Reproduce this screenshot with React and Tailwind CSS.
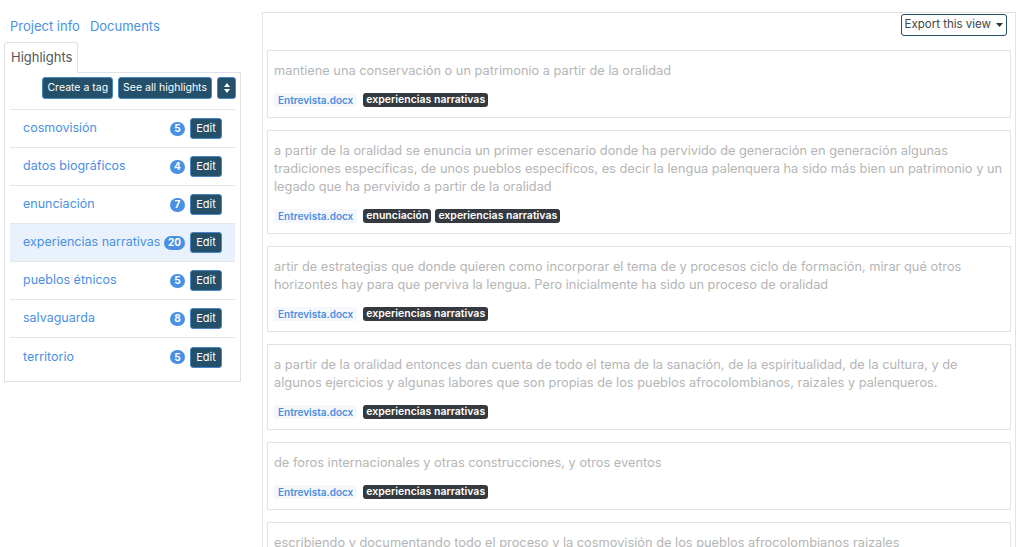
import React from "react";

const tags = [
  { name: "cosmovisión", count: 5 },
  { name: "datos biográficos", count: 4 },
  { name: "enunciación", count: 7 },
  { name: "experiencias narrativas", count: 20, active: true },
  { name: "pueblos étnicos", count: 5 },
  { name: "salvaguarda", count: 8 },
  { name: "territorio", count: 5 },
];

const highlights = [
  {
    text: "mantiene una conservación o un patrimonio a partir de la oralidad",
    tags: ["experiencias narrativas"],
  },
  {
    text: "a partir de la oralidad se enuncia un primer escenario donde ha pervivido de generación en generación algunas tradiciones específicas, de unos pueblos específicos, es decir la lengua palenquera ha sido más bien un patrimonio y un legado que ha pervivido a partir de la oralidad",
    tags: ["enunciación", "experiencias narrativas"],
  },
  {
    text: "artir de estrategias que donde quieren como incorporar el tema de y procesos ciclo de formación, mirar qué otros horizontes hay para que perviva la lengua. Pero inicialmente ha sido un proceso de oralidad",
    tags: ["experiencias narrativas"],
  },
  {
    text: "a partir de la oralidad entonces dan cuenta de todo el tema de la sanación, de la espiritualidad, de la cultura, y de algunos ejercicios y algunas labores que son propias de los pueblos afrocolombianos, raizales y palenqueros.",
    tags: ["experiencias narrativas"],
  },
  {
    text: "de foros internacionales y otras construcciones, y otros eventos",
    tags: ["experiencias narrativas"],
  },
  {
    text: "escribiendo y documentando todo el proceso y la cosmovisión de los pueblos afrocolombianos raizales",
    tags: ["experiencias narrativas"],
  },
];

const darkBtn =
  "bg-[#24506a] text-white border border-[#4a86c5] rounded-[3px] leading-none";

const App = () => {
  return (
    <div
      className="flex items-start h-[547px] overflow-hidden bg-white text-[13px]"
      style={{ fontFamily: "Inter, 'Noto Sans', sans-serif" }}
    >
      {/* Sidebar */}
      <div className="w-[237px] ml-[4px] mt-[17px] shrink-0">
        <div className="flex gap-[10px] pl-[6px] h-[18px] items-center text-[#4a90e2] text-[13px] mt-[1px]">
          <span>Project info</span>
          <span>Documents</span>
        </div>
        <div className="flex mt-[5px]">
          <div className="w-[74px] h-[31px] border border-b-0 border-[#dee2e6] rounded-t-[3px] flex items-center pl-[6px] text-[#555] bg-white relative top-[1px]">
            Highlights
          </div>
        </div>
        <div className="border border-[#dee2e6] pb-[5px]">
          <div className="flex justify-end gap-[5px] pt-[4px] pr-[4px] h-[36px]">
            <button className={`${darkBtn} h-[22px] px-[4px] text-[10.5px]`}>
              Create a tag
            </button>
            <button className={`${darkBtn} h-[22px] px-[4px] text-[10.5px]`}>
              See all highlights
            </button>
            <button className={`${darkBtn} h-[22px] w-[19px] flex items-center justify-center`}>
              <svg width="6" height="10" viewBox="0 0 6 10">
                <path d="M3 0 L6 4 H0 Z M3 10 L0 6 H6 Z" fill="white" />
              </svg>
            </button>
          </div>
          <div className="mx-[5px] border-t border-[#e6e6e6]">
            {tags.map((t) => (
              <div
                key={t.name}
                className={`flex items-center h-[38px] border-b border-[#e6e6e6] last:border-b-0 pl-[13px] pr-[13px] ${
                  t.active ? "bg-[#e9f1fc]" : ""
                }`}
              >
                <span className="text-[#4a90e2] text-[12.5px] flex-1 whitespace-nowrap">
                  {t.name}
                </span>
                <span className="bg-[#4a90e2] text-white text-[10px] font-bold rounded-full h-[14px] min-w-[15px] px-[4px] flex items-center justify-center mr-[5px]">
                  {t.count}
                </span>
                <button className={`${darkBtn} h-[21px] w-[32px] text-[11px] shrink-0`}>
                  Edit
                </button>
              </div>
            ))}
          </div>
        </div>
      </div>

      {/* Main */}
      <div className="ml-[21px] mt-[12px] w-[754px] h-[600px] border border-[#e3e3e3] px-[4px]">
        <div className="flex justify-end pt-[1px] pr-[4px]">
          <button className="h-[22px] px-[3px] border border-[#24506a] rounded-[3px] text-[#444] text-[11.5px] flex items-center gap-[5px]">
            Export this view
            <svg width="7" height="4" viewBox="0 0 7 4">
              <path d="M0 0 H7 L3.5 4 Z" fill="#333" />
            </svg>
          </button>
        </div>
        <div className="flex flex-col gap-[12px] mt-[14px]">
          {highlights.map((h, i) => (
            <div key={i} className="border border-[#e3e3e3] px-[6px] pt-[11px] pb-[10px]">
              <p className="text-[#b5b5b5] text-[12.8px] leading-[18px]">{h.text}</p>
              <div className="flex items-center gap-[4px] mt-[13px]">
                <span className="bg-[#f5f7fa] text-[#4a90e2] text-[10px] font-semibold px-[4px] h-[14px] flex items-center rounded-[2px] mr-[2px]">
                  Entrevista.docx
                </span>
                {h.tags.map((tg) => (
                  <span
                    key={tg}
                    className="bg-[#343a40] text-white text-[10.5px] font-semibold px-[3px] h-[14px] flex items-center rounded-[3px]"
                  >
                    {tg}
                  </span>
                ))}
              </div>
            </div>
          ))}
        </div>
      </div>
    </div>
  );
};

export default App;
